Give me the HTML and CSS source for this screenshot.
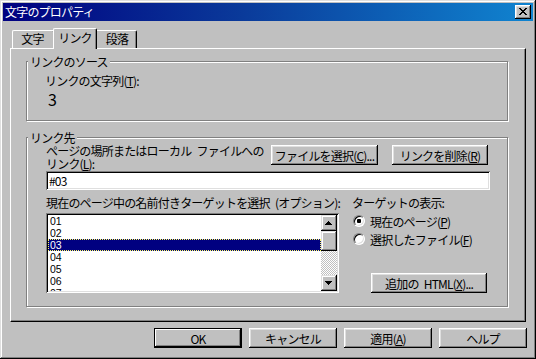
FILE: index.html
```html
<!DOCTYPE html>
<html lang="ja">
<head>
<meta charset="utf-8">
<title>文字のプロパティ</title>
<link rel="stylesheet" href="styles.css">
</head>
<body>
<div class="window">
  <div class="titlebar">
    <span class="title">文字のプロパティ</span>
    <div class="close">
      <svg class="glyph-x" width="8" height="7" viewBox="0 0 8 7"><path d="M0 0h2v1H0zM6 0h2v1H6zM1 1h2v1H1zM5 1h2v1H5zM2 2h4v1H2zM3 3h2v1H3zM2 4h4v1H2zM1 5h2v1H1zM5 5h2v1H5zM0 6h2v1H0zM6 6h2v1H6z"/></svg>
    </div>
  </div>
  <div class="client">
    <div class="tabs">
      <div class="tab t1">文字</div>
      <div class="tab active">リンク</div>
      <div class="tab t3">段落</div>
    </div>
    <div class="panel">
      <div class="group g1">
        <div class="legend">リンクのソース</div>
        <div class="gbody g1body">
          <div class="label src-label">リンクの文字列(<u>T</u>):</div>
          <div class="linktext">3</div>
        </div>
      </div>
      <div class="group g2">
        <div class="legend">リンク先</div>
        <div class="gbody g2body">
          <div class="row-url">
            <div class="label url-label">ページの場所またはローカル&ensp;ファイルへの<br>リンク(<u>L</u>):</div>
            <div class="btn btn-file">ファイルを選択(<u>C</u>)...</div>
            <div class="btn btn-unlink">リンクを削除(<u>R</u>)</div>
          </div>
          <div class="field">#03</div>
          <div class="row-target">
            <div class="col-list">
              <div class="label">現在のページ中の名前付きターゲットを選択&ensp;(オプション):</div>
              <div class="listbox">
                <ul class="items">
                  <li>01</li>
                  <li>02</li>
                  <li class="sel">03</li>
                  <li>04</li>
                  <li>05</li>
                  <li>06</li>
                  <li>07</li>
                </ul>
                <div class="scrollbar">
                  <div class="sb-btn"><svg width="7" height="4" viewBox="0 0 7 4"><path d="M3 0h1v1H3zM2 1h3v1H2zM1 2h5v1H1zM0 3h7v1H0z"/></svg></div>
                  <div class="sb-thumb"></div>
                  <div class="sb-track"></div>
                  <div class="sb-btn"><svg width="7" height="4" viewBox="0 0 7 4"><path d="M0 0h7v1H0zM1 1h5v1H1zM2 2h3v1H2zM3 3h1v1H3z"/></svg></div>
                </div>
              </div>
            </div>
            <div class="col-show">
              <div class="label">ターゲットの表示:</div>
              <div class="radio-row first"><span class="radio checked"></span><span>現在のページ(<u>P</u>)</span></div>
              <div class="radio-row"><span class="radio"></span><span>選択したファイル(<u>F</u>)</span></div>
              <div class="btn btn-html">追加の&ensp;HTML(<u>X</u>)...</div>
            </div>
          </div>
        </div>
      </div>
    </div>
    <div class="footer">
      <div class="btn default">OK</div>
      <div class="btn">キャンセル</div>
      <div class="btn">適用(<u>A</u>)</div>
      <div class="btn">ヘルプ</div>
    </div>
  </div>
</div>
</body>
</html>
```

FILE: styles.css
```css
* { box-sizing: border-box; }
html, body { margin: 0; padding: 0; }
body {
  width: 536px;
  height: 359px;
  overflow: hidden;
  background: #c0c0c0;
  font-family: "Noto Sans CJK JP", "Noto Sans", sans-serif;
  font-size: 12px;
  letter-spacing: -0.8px;
  color: #000;
}
u { text-decoration: underline; text-underline-offset: 1px; }

.window {
  width: 536px;
  height: 359px;
  background: #c0c0c0;
  padding: 3px;
  display: flex;
  flex-direction: column;
  box-shadow: inset -1px -1px #000, inset 1px 1px #dfdfdf, inset -2px -2px #808080, inset 2px 2px #fff;
}

.titlebar {
  height: 18px;
  flex: none;
  display: flex;
  align-items: center;
  justify-content: space-between;
  padding: 0 2px 0 2px;
  background: linear-gradient(to right, #000080 0%, #0a3a9a 45%, #1084d0 100%);
  color: #fff;
}
.title { line-height: 18px; }
.close {
  width: 16px;
  height: 14px;
  background: #c0c0c0;
  display: flex;
  align-items: center;
  justify-content: center;
  padding: 0 1px 1px 0;
  box-shadow: inset -1px -1px #000, inset 1px 1px #fff, inset -2px -2px #808080, inset 2px 2px #dfdfdf;
}
.glyph-x { display: block; shape-rendering: crispEdges; fill: #000; }

.client {
  flex: 1;
  display: flex;
  flex-direction: column;
  padding: 7px 6px 0 7px;
}

/* tabs */
.tabs {
  height: 20px;
  display: flex;
  align-items: flex-end;
  margin-left: 2px;
}
.tab {
  height: 18px;
  padding-top: 1px;
  line-height: 13px;
  text-align: center;
  background: #c0c0c0;
  border-top: 1px solid #fff;
  border-left: 1px solid #fff;
  border-right: 1px solid #000;
  border-radius: 2px 2px 0 0;
  box-shadow: inset -1px 0 #808080;
}
.t1 { width: 43px; padding-right: 2px; }
.t3 { width: 42px; padding-left: 2px; }
.tab.active {
  width: 44px;
  height: 21px;
  margin: 0 -2px -1px;
  padding-top: 2px;
  position: relative;
  z-index: 1;
}

/* panel */
.panel {
  width: 516px;
  height: 274px;
  border-top: 1px solid #fff;
  border-left: 1px solid #fff;
  border-right: 1px solid #000;
  border-bottom: 1px solid #000;
  box-shadow: inset -1px -1px #808080;
  padding: 12px 17px 0 15px;
}

.group {
  border: 1px solid #808080;
  box-shadow: inset 1px 1px #fff, 1px 1px 0 #fff;
}
.g1 { height: 60px; }
.g2 { height: 170px; margin-top: 16px; }
.legend {
  width: fit-content;
  margin: -7px 0 0 1px;
  padding: 0 2px;
  line-height: 13px;
  background: #c0c0c0;
}
.label { line-height: 13px; white-space: nowrap; }

.g1body { padding: 6px 0 0 18px; }
.linktext {
  margin-top: 2px;
  padding-left: 3px;
  font-size: 16px;
  line-height: 20px;
  letter-spacing: 0;
}

.g2body { padding: 0 17px 0 19px; }
.row-url {
  display: flex;
  align-items: flex-start;
  height: 26px;
}
.url-label { width: 225px; flex: none; }

.btn {
  height: 20px;
  display: flex;
  align-items: center;
  justify-content: center;
  white-space: nowrap;
  line-height: 13px;
  background: #c0c0c0;
  box-shadow: inset -1px -1px #000, inset 1px 1px #fff, inset -2px -2px #808080, inset 2px 2px #dfdfdf;
}
.btn-file { width: 107px; margin-top: 1px; }
.btn-unlink { width: 96px; margin-top: 1px; margin-left: 14px; }

.field {
  height: 19px;
  margin-top: 1px;
  padding: 3px 0 0 3px;
  line-height: 13px;
  background: #fff;
  box-shadow: inset 1px 1px #808080, inset -1px -1px #fff, inset 2px 2px #000, inset -2px -2px #dfdfdf;
}

.row-target {
  display: flex;
  margin-top: 6px;
}
.col-list { width: 293px; flex: none; }
.listbox {
  margin-top: 4px;
  height: 80px;
  padding: 2px;
  display: flex;
  background: #fff;
  box-shadow: inset 1px 1px #808080, inset -1px -1px #fff, inset 2px 2px #000, inset -2px -2px #dfdfdf;
}
.items {
  list-style: none;
  margin: 0;
  padding: 0;
  flex: 1;
  overflow: hidden;
}
.items li {
  height: 12px;
  line-height: 12px;
  padding-left: 2px;
  font-family: "Liberation Sans", Arial, sans-serif;
  font-size: 10.5px;
  letter-spacing: 0;
}
.items li.sel {
  background: #000080;
  color: #fff;
  outline: 1px dotted #ffff60;
  outline-offset: -1px;
}
.scrollbar {
  width: 16px;
  flex: none;
  display: flex;
  flex-direction: column;
}
.sb-btn, .sb-thumb {
  background: #c0c0c0;
  box-shadow: inset -1px -1px #000, inset 1px 1px #dfdfdf, inset -2px -2px #808080, inset 2px 2px #fff;
}
.sb-btn {
  height: 16px;
  display: flex;
  align-items: center;
  justify-content: center;
  padding: 0 1px 1px 0;
}
.sb-btn svg { display: block; shape-rendering: crispEdges; fill: #000; }
.sb-thumb { height: 20px; }
.sb-track {
  flex: 1;
  background: repeating-conic-gradient(#fff 0 25%, #c0c0c0 0 50%) 0 0 / 2px 2px;
}

.col-show {
  flex: 1;
  margin-left: 13px;
  display: flex;
  flex-direction: column;
}
.radio-row {
  height: 18px;
  display: flex;
  align-items: center;
  padding-left: 1px;
  white-space: nowrap;
}
.radio-row.first { margin-top: 3px; }
.radio {
  width: 12px;
  height: 12px;
  flex: none;
  margin-right: 5px;
  border-radius: 50%;
  border: 1px solid;
  border-color: #808080 #fff #fff #808080;
  background: #fff;
  box-shadow: inset 1px 1px #000, inset -1px -1px #dfdfdf;
  display: flex;
  align-items: center;
  justify-content: center;
}
.radio.checked::after {
  content: "";
  width: 4px;
  height: 4px;
  border-radius: 1px;
  background: #000;
}
.btn-html {
  width: 116px;
  margin: auto 0 0 19px;
}

.footer {
  display: flex;
  justify-content: flex-end;
  gap: 7px;
  margin-top: 6px;
}
.footer .btn { width: 88px; }
.btn.default {
  box-shadow: inset 1px 1px #000, inset -2px -2px #000, inset 2px 2px #fff, inset -3px -3px #808080;
}
```
